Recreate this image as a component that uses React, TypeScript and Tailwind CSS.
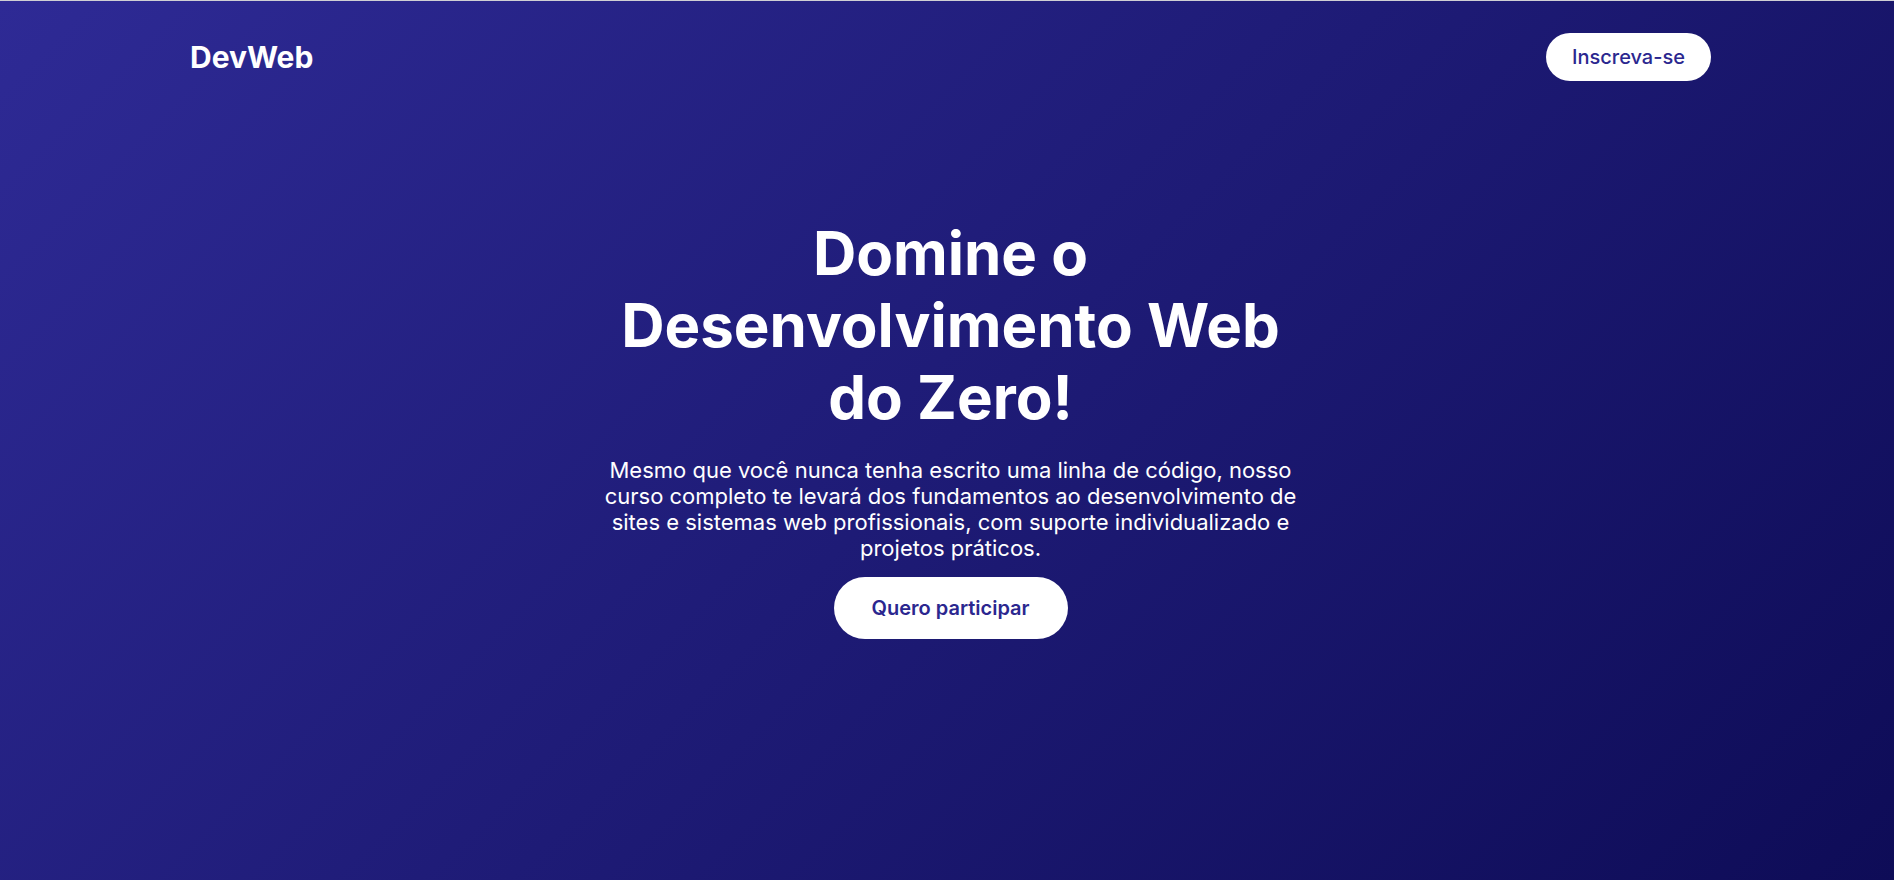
import React from "react";

export default function App() {
  return (
    <div
      className="min-h-screen border-t border-[#cfcfd4] bg-[linear-gradient(135deg,#2e2a95_0%,#0e0c57_100%)] text-white"
      style={{ fontFamily: "Inter, 'Noto Sans', sans-serif" }}
    >
      {/* Cabeçalho */}
      <header className="flex items-center justify-between pl-[190px] pr-[183px] py-8">
        <span className="text-3xl font-bold">DevWeb</span>
        <button className="rounded-full bg-white px-[26px] py-2.5 text-xl font-medium text-[#2b278f]">
          Inscreva-se
        </button>
      </header>

      {/* Hero */}
      <main className="flex flex-col items-center pl-[190px] pr-[183px] pt-[104px] text-center">
        <h1 className="max-w-[700px] text-6xl font-bold leading-[1.2]">
          Domine o Desenvolvimento Web do Zero!
        </h1>
        <p className="mt-6 max-w-[722px] text-[22px] leading-[26px]">
          Mesmo que você nunca tenha escrito uma linha de código, nosso curso
          completo te levará dos fundamentos ao desenvolvimento de sites e
          sistemas web profissionais, com suporte individualizado e projetos
          práticos.
        </p>
        <button className="mt-4 rounded-full bg-white px-[38px] py-[17px] text-xl font-semibold leading-7 text-[#2b278f]">
          Quero participar
        </button>
      </main>
    </div>
  );
}
